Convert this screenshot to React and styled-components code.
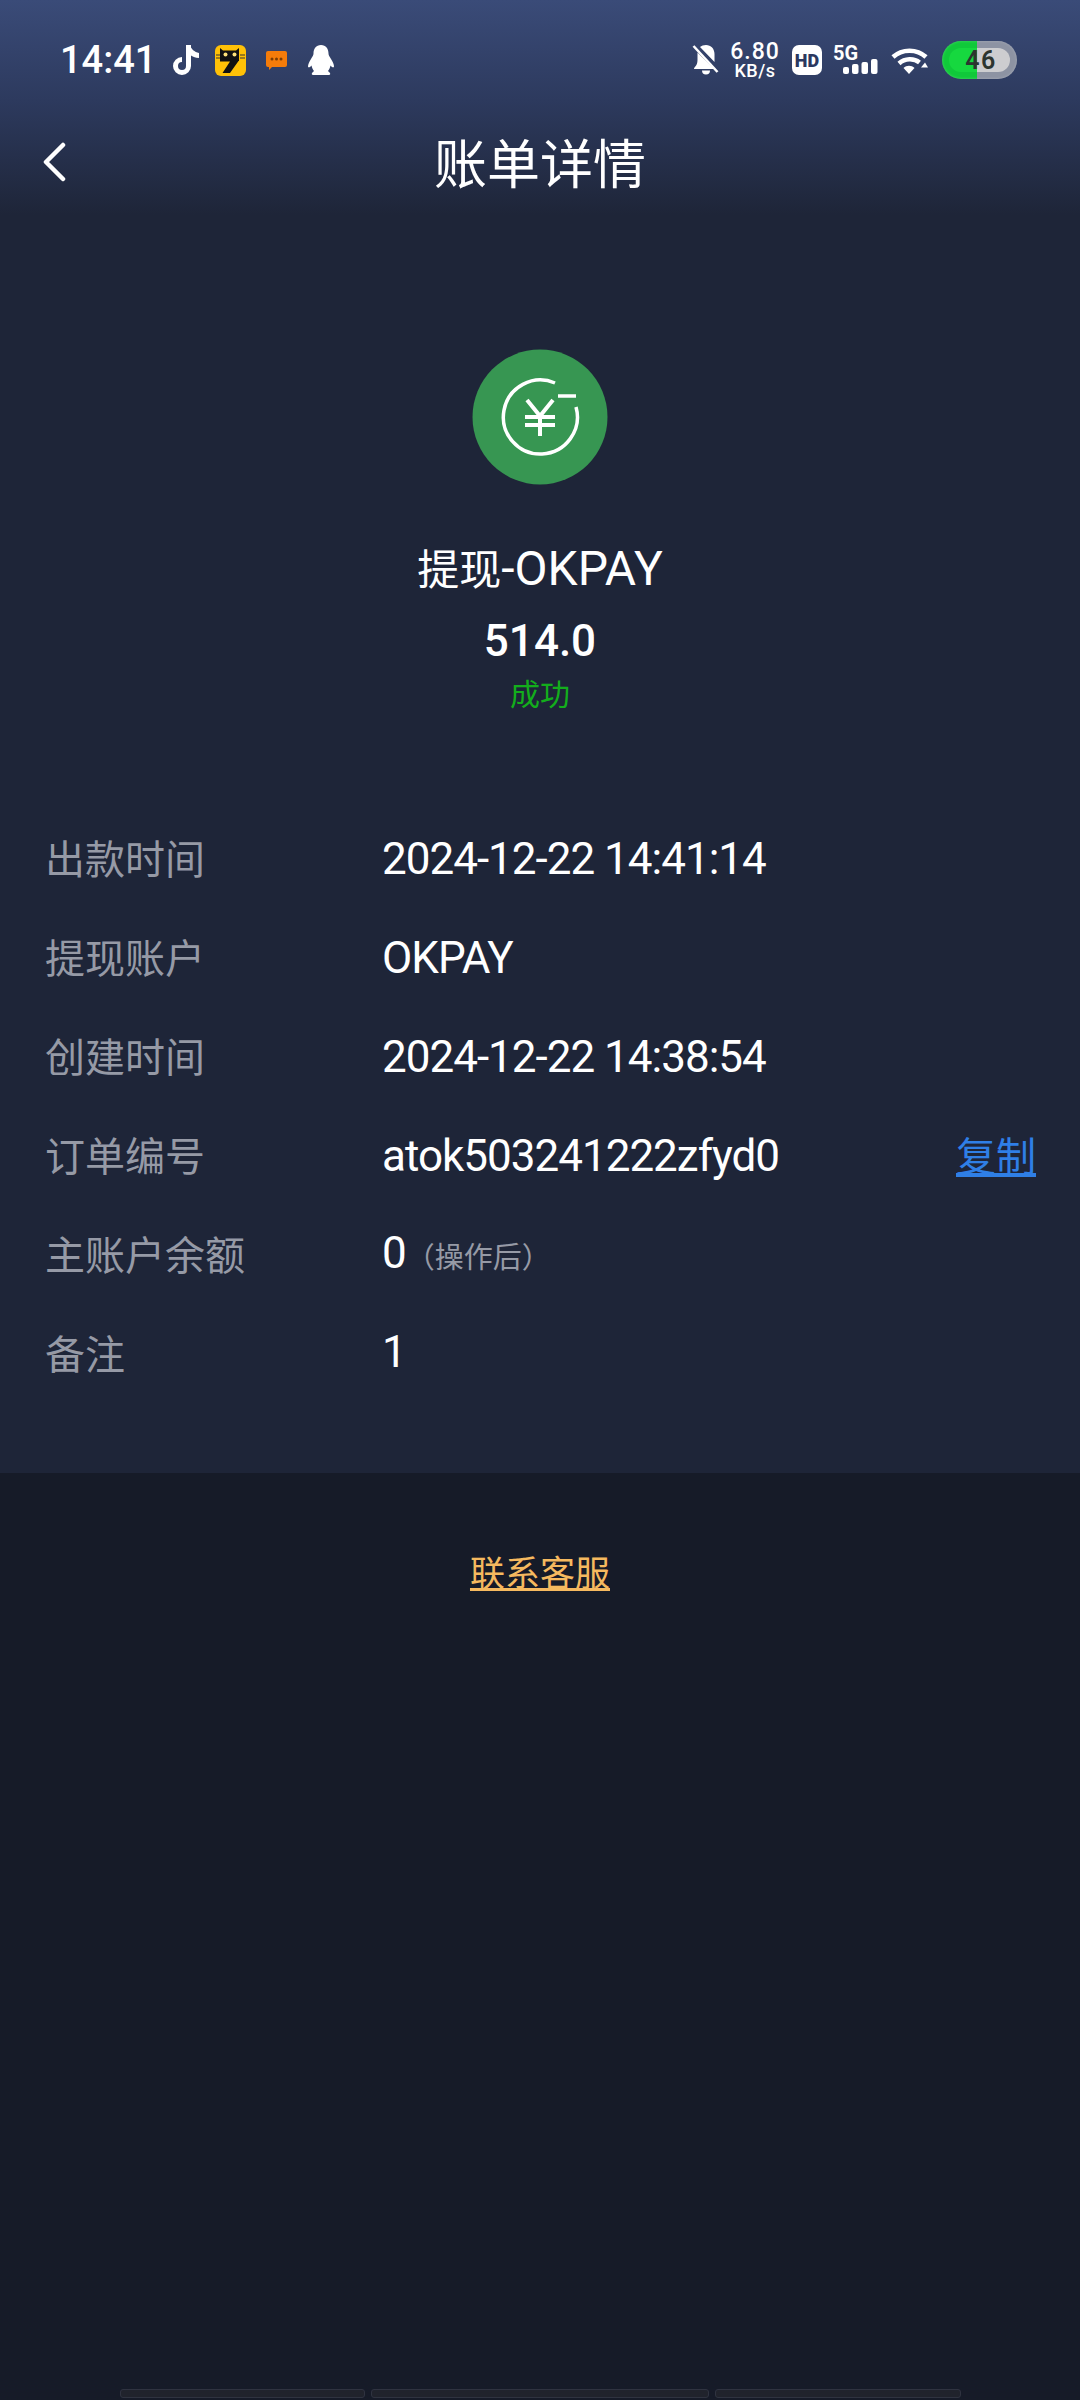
import React from "react";
import styled, { createGlobalStyle } from "styled-components";

const Global = createGlobalStyle`
  html, body { margin: 0; padding: 0; background: #161b28; }
  * { box-sizing: border-box; }
`;
const FONT = `Roboto, "Noto Sans CJK SC", sans-serif`;

const Page = styled.div`
  width: 1080px; height: 2400px; display: flex; flex-direction: column;
  background: #161b28; font-family: ${FONT}; overflow: hidden;
`;
const Panel = styled.section`
  height: 1473px; flex: none;
  background: linear-gradient(180deg, #3a4b78 0px, #2d3a5e 100px, #1e2538 215px, #1e2538 100%);
`;
const StatusBar = styled.div`
  height: 120px; display: flex; align-items: center; justify-content: space-between;
  padding: 0 63px 0 60px; color: #fff;
`;
const StatusGroup = styled.div`display: flex; align-items: center;`;
const Time = styled.span`font-size: 38px; font-weight: 500; line-height: 40px; width: 93px; white-space: nowrap;`;
const Glyph = styled.svg`display: block; flex: none; overflow: visible; margin-left: ${p => p.$gap || 0}px;`;
const Speed = styled.div`
  margin-left: 12px; width: 48px; display: flex; flex-direction: column; align-items: center;
  font-weight: 500; color: #fff; white-space: nowrap;
`;
const SpeedValue = styled.span`font-size: 23px; line-height: 20px; letter-spacing: 1px;`;
const SpeedUnit = styled.span`font-size: 18px; line-height: 17px; letter-spacing: .5px;`;
const Battery = styled.div`
  width: 75px; height: 38px; margin-left: 14px; border-radius: 19px; padding: 7px;
  background: linear-gradient(90deg, #10c93a 0 47%, #8d93a3 47% 100%);
  box-shadow: inset 0 0 3px rgba(255, 255, 255, .25);
`;
const BatteryCore = styled.div`
  height: 24px; border-radius: 12px; padding-left: 3px;
  display: flex; align-items: center; justify-content: center;
  background: linear-gradient(90deg, #16d83f 0 46%, #cdcdd0 46% 100%);
  font-size: 25px; font-weight: 600; color: #2d352f; letter-spacing: 1.5px;
`;
const Nav = styled.header`
  height: 88px; padding-top: 4px; display: flex; align-items: center; justify-content: center; position: relative;
`;
const Back = styled.svg`position: absolute; left: 42px; top: 22px;`;
const Title = styled.h1`margin: 0; font-size: 53px; font-weight: 400; color: #fff; line-height: 84px;`;
const Hero = styled.div`
  display: flex; flex-direction: column; align-items: center; padding-top: 141px; color: #fff;
`;
const Name = styled.div`margin-top: 54px; font-size: 42px; line-height: 60px; white-space: nowrap;`;
const NameLatin = styled.span`font-size: 48px;`;
const Amount = styled.div`margin-top: 10px; font-size: 44px; font-weight: 500; line-height: 60px;`;
const Status = styled.div`font-size: 30px; line-height: 44px; color: #13ae1c; margin-top: 2px;`;
const Rows = styled.dl`margin: 0; padding: 94px 44px 0 45px;`;
const Row = styled.div`
  height: 99px; display: grid; grid-template-columns: 337px 1fr auto; align-items: center;
`;
const Label = styled.dt`font-size: 40px; color: #969aa6; line-height: 50px;`;
const Value = styled.dd`
  margin: 0; font-size: 44px; letter-spacing: -1px; color: #fff; line-height: 50px; white-space: nowrap;
  padding-bottom: ${p => p.$raise || 3}px;
`;
const Hint = styled.span`font-size: 29px; letter-spacing: 0; color: #969aa6;`;
const Copy = styled.a`font-size: 40px; color: #2f7fe6; text-decoration: underline; line-height: 50px;`;
const Contact = styled.a`
  display: block; margin-top: 77px; text-align: center; font-size: 35px; line-height: 50px;
  color: #f5b95f; text-decoration: underline;
`;
const Handle = styled.div`
  margin-top: auto; display: flex; gap: 6px; padding: 0 119px 2px 120px;
`;
const HandlePart = styled.div`
  flex: ${p => p.$w} 0 0; height: 9px; border-radius: 3px; background: #20232c; border: 1px solid #2f3340;
`;

const rows = [
  ["出款时间", "2024-12-22 14:41:14"],
  ["提现账户", "OKPAY"],
  ["创建时间", "2024-12-22 14:38:54"],
  ["订单编号", "atok503241222zfyd0", true],
];

export default function App() {
  return (
    <Page>
      <Global />
      <Panel>
        <StatusBar>
          <StatusGroup>
            <Time>14:41</Time>
            <Glyph $gap={19} width="28" height="30" viewBox="0 0 28 30" fill="none">
              <path d="M16.500 0v21a6.500 6.500 0 1 1-6.500-6.500" stroke="#fff" strokeWidth="5" />
              <path fill="#fff" d="M18 0c1 4 4.500 7 9 8v5c-3.500 0-7-1.500-9-3.500z" />
            </Glyph>
            <Glyph $gap={15} width="31" height="31" viewBox="0 0 31 31">
              <rect width="31" height="31" rx="6" fill="#ffc107" />
              <path d="M5 3l3 2.500h13l3-2.500v13H23.500L15 28H7.500L15 16.500H5z" fill="#111" />
              <circle cx="10.500" cy="9.500" r="2" fill="#ffe27a" />
              <circle cx="19.500" cy="9.500" r="2" fill="#ffe27a" />
              <path d="M1 10h4M1 13h4M25 10h5M25 13h5" stroke="#333" strokeWidth="1" />
            </Glyph>
            <Glyph $gap={20} width="21" height="19" viewBox="0 0 21 19">
              <path d="M2 0h17a2 2 0 0 1 2 2v12a2 2 0 0 1-2 2H6l-3 3v-3H2a2 2 0 0 1-2-2V2a2 2 0 0 1 2-2z" fill="#f57c0a" />
              <circle cx="6" cy="8" r="1.500" fill="#7a3d05" />
              <circle cx="10.500" cy="8" r="1.500" fill="#7a3d05" />
              <circle cx="15" cy="8" r="1.500" fill="#7a3d05" />
            </Glyph>
            <Glyph $gap={21} width="26" height="30" viewBox="0 0 26 30">
              <path fill="#fff" d="M13 0C18 0 20.500 4 20.500 8.500 20.500 10 21.500 11.500 23 14 25 17 26 19.500 26 21.500 26 23 24 22.500 22.500 20.500 22 23 21 25 20 26L22 28C22.500 29 22 30 21 30H5C4 30 3.500 29 4 28L6 26C5 25 4 23 3.500 20.500 2 22.500 0 23 0 21.500 0 19.500 1 17 3 14 4.500 11.500 5.500 10 5.500 8.500 5.500 4 8 0 13 0Z" />
            </Glyph>
          </StatusGroup>
          <StatusGroup>
            <Glyph width="27" height="30" viewBox="0 0 27 30">
              <path fill="#fff" d="M14 0c5 0 8.500 3.800 8.500 9v8L8 2c1.500-1.300 3.500-2 6-2zM5.500 7.500 22 24H2c0-2 3.500-3 3.500-9zM10 25.500h8a4 4 0 0 1-8 0z" />
              <path d="M1.500 1l24 26" stroke="#fff" strokeWidth="2.500" />
            </Glyph>
            <Speed>
              <SpeedValue>6.80</SpeedValue>
              <SpeedUnit>KB/s</SpeedUnit>
            </Speed>
            <Glyph $gap={13} width="30" height="30" viewBox="0 0 30 30">
              <rect width="30" height="30" rx="7" fill="#fff" />
              <text x="15" y="21.500" textAnchor="middle" fontFamily="Roboto, sans-serif" fontWeight="900" fontSize="18" fill="#2b3860">HD</text>
            </Glyph>
            <Glyph $gap={11} width="45" height="30" viewBox="0 0 45 30">
              <text x="0" y="15" fontFamily="Roboto, sans-serif" fontWeight="700" fontSize="20" fill="#fff">5G</text>
              <rect x="10" y="22" width="6" height="7" rx="2" fill="#fff" />
              <rect x="19" y="19" width="6.500" height="10" rx="2" fill="#fff" />
              <rect x="28.500" y="17" width="6.500" height="12" rx="2" fill="#fff" />
              <rect x="38" y="14" width="6.500" height="15" rx="2" fill="#fff" />
            </Glyph>
            <Glyph $gap={13} width="37" height="30" viewBox="0 0 37 30" fill="none">
              <path d="M2 12c9-8.500 24-8.500 33 0" stroke="#fff" strokeWidth="4.500" />
              <path d="M8 18.500c6-5.500 15-5.500 20.500-1" stroke="#fff" strokeWidth="4.500" />
              <path d="M18 29l-5.500-6c3-3 8-3 11 0z" fill="#fff" />
              <path d="M37 22.500h-7l4-5z" fill="#fff" />
            </Glyph>
            <Battery>
              <BatteryCore>46</BatteryCore>
            </Battery>
          </StatusGroup>
        </StatusBar>
        <Nav>
          <Back width="24" height="40" viewBox="0 0 24 40" fill="none">
            <path d="M21 3 4 20l17 17" stroke="#fff" strokeWidth="4.500" strokeLinecap="round" strokeLinejoin="round" />
          </Back>
          <Title>账单详情</Title>
        </Nav>
        <Hero>
          <Glyph width="136" height="136" viewBox="0 0 136 136" fill="none">
            <circle cx="68" cy="68" r="67.500" fill="#379652" />
            <path d="M83 34A37 37 0 1 0 104 58" stroke="#fff" strokeWidth="3.500" />
            <path d="M86 47h18" stroke="#fff" strokeWidth="3.500" />
            <path d="M55 51l13 16 13-16M53 68h30M53 76h30M68 67v20" stroke="#fff" strokeWidth="4" />
          </Glyph>
          <Name>提现<NameLatin>-OKPAY</NameLatin></Name>
          <Amount>514.0</Amount>
          <Status>成功</Status>
        </Hero>
        <Rows>
          {rows.map(([l, v, copy]) => (
            <Row key={l}>
              <Label>{l}</Label>
              <Value>{v}</Value>
              {copy && <Copy>复制</Copy>}
            </Row>
          ))}
          <Row>
            <Label>主账户余额</Label>
            <Value>0<Hint>（操作后）</Hint></Value>
          </Row>
          <Row>
            <Label>备注</Label>
            <Value $raise={8}>1</Value>
          </Row>
        </Rows>
      </Panel>
      <Contact>联系客服</Contact>
      <Handle>
        <HandlePart $w={245} />
        <HandlePart $w={339} />
        <HandlePart $w={246} />
      </Handle>
    </Page>
  );
}
